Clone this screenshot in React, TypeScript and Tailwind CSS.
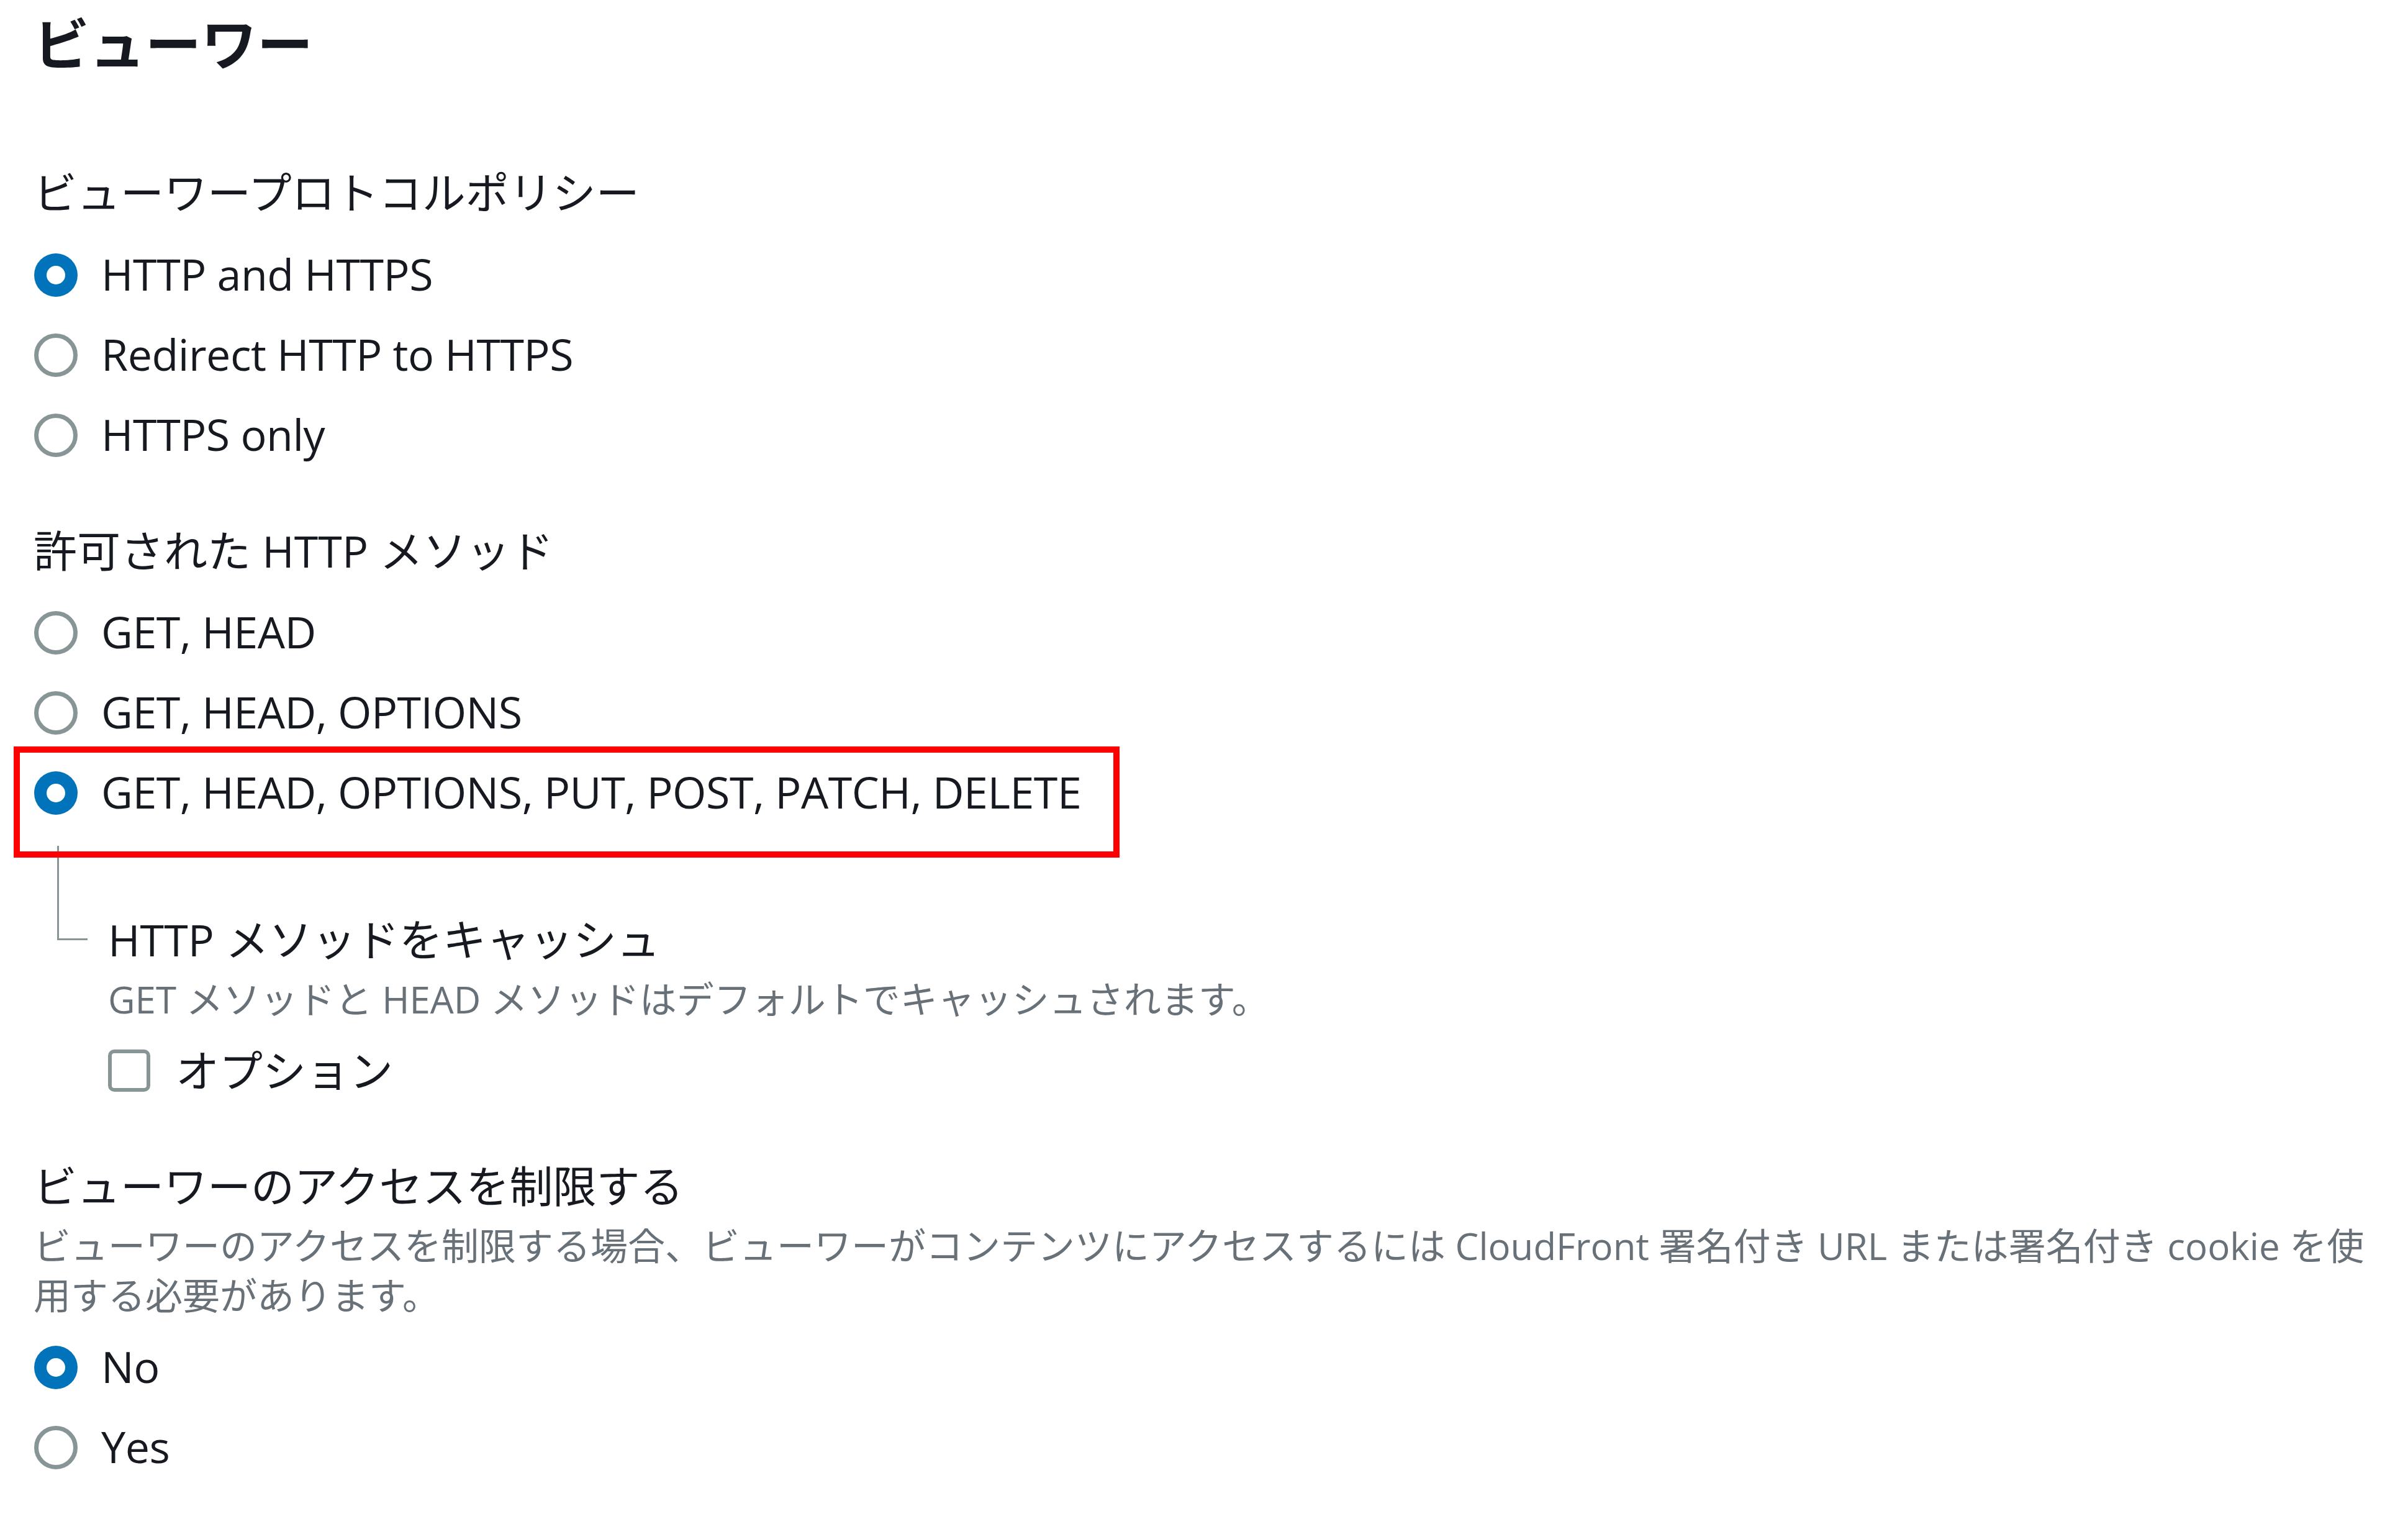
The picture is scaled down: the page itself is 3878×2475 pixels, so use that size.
type RadioProps = {
  label: string
  checked?: boolean
}

function Radio({ label, checked = false }: RadioProps) {
  return (
    <div className="flex h-[129px] items-center gap-[38px] pl-px">
      {checked ? (
        <span className="flex h-[70px] w-[70px] shrink-0 items-center justify-center rounded-full bg-[#0073bb]">
          <span className="h-[30px] w-[30px] rounded-full bg-white" />
        </span>
      ) : (
        <span className="h-[70px] w-[70px] shrink-0 rounded-full border-[7px] border-[#879596] bg-white" />
      )}
      <span className="-mt-[3px] text-[70px] leading-[90px] tracking-[-0.5px] text-[#16191f]">{label}</span>
    </div>
  )
}

function FieldLabel({ children, className = '' }: { children: React.ReactNode; className?: string }) {
  return <div className={`text-[70px] leading-[90px] text-[#16191f] ${className}`}>{children}</div>
}

function Hint({ children, className = '' }: { children: React.ReactNode; className?: string }) {
  return <div className={`text-[60px] leading-[80px] text-[#687078] ${className}`}>{children}</div>
}

export default function App() {
  return (
    <div className="relative min-h-[2475px] w-full bg-white px-[54px] pt-[15px] font-['Open_Sans','Noto_Sans_CJK_JP',sans-serif]">
      <h2 className="text-[90px] font-bold leading-[110px] text-[#16191f]">ビューワー</h2>

      {/* Viewer protocol policy */}
      <FieldLabel className="mt-[140px]">ビューワープロトコルポリシー</FieldLabel>
      <div className="mt-[23px]">
        <Radio label="HTTP and HTTPS" checked />
        <Radio label="Redirect HTTP to HTTPS" />
        <Radio label="HTTPS only" />
      </div>

      {/* Allowed HTTP methods */}
      <FieldLabel className="mt-[77px]">許可された HTTP メソッド</FieldLabel>
      <div className="mt-[22px]">
        <Radio label="GET, HEAD" />
        <Radio label="GET, HEAD, OPTIONS" />
        <Radio label="GET, HEAD, OPTIONS, PUT, POST, PATCH, DELETE" checked />
      </div>

      {/* Cached methods, nested under the selected option */}
      <div className="mt-[21px] flex">
        <div className="ml-[38px] h-[152px] w-[49px] shrink-0 border-b-[3px] border-l-[3px] border-[#879596]" />
        <div className="ml-[33px] pt-[106px]">
          <FieldLabel>HTTP メソッドをキャッシュ</FieldLabel>
          <Hint className="mt-[11px]">GET メソッドと HEAD メソッドはデフォルトでキャッシュされます。</Hint>
          <label className="mt-[35px] flex h-[80px] items-center gap-[41px]">
            <span className="h-[68px] w-[68px] shrink-0 rounded-[10px] border-[6px] border-[#879596] bg-white" />
            <span className="text-[70px] leading-[90px] text-[#16191f]">オプション</span>
          </label>
        </div>
      </div>

      {/* Restrict viewer access */}
      <FieldLabel className="mt-[101px]">ビューワーのアクセスを制限する</FieldLabel>
      <Hint className="mt-[11px]">
        ビューワーのアクセスを制限する場合、ビューワーがコンテンツにアクセスするには CloudFront 署名付き URL または署名付き cookie を使用する必要があります。
      </Hint>
      <div className="mt-[11px]">
        <Radio label="No" checked />
        <Radio label="Yes" />
      </div>

      {/* highlight annotation */}
      <div className="pointer-events-none absolute left-[22px] top-[1202px] h-[179px] w-[1781px] border-[10px] border-[#ff0000]" />
    </div>
  )
}
